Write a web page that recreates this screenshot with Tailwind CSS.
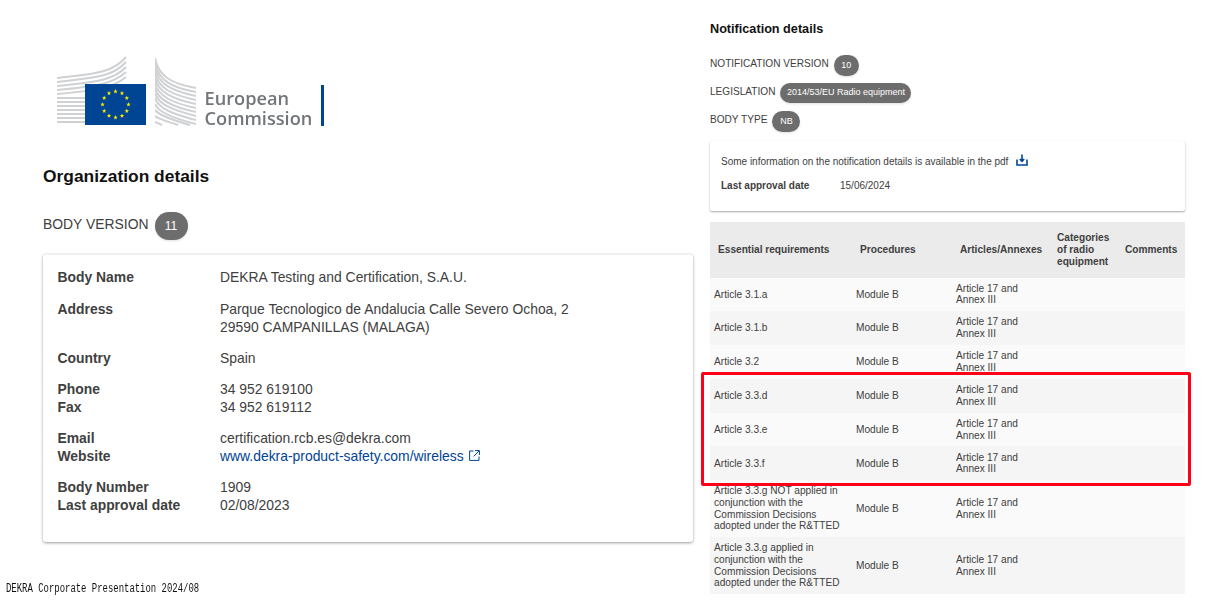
<!DOCTYPE html>
<html lang="en">
    <head>
        <meta charset="UTF-8" />
        <title>Organization details</title>
        <script src="https://cdn.jsdelivr.net/npm/@tailwindcss/browser@4"></script>
    </head>
    <body class="relative h-[604px] w-[1207px] overflow-hidden bg-white font-['Liberation_Sans',sans-serif] text-[#404040]">
        <div class="flex h-full items-start">
            <!-- Left column: body details -->
            <div class="flex h-full w-[710px] shrink-0 flex-col">
                <div class="pl-[57px] pt-[56px]">
                    <svg width="270" height="72" viewBox="57 56 270 72" class="block blur-[0.4px]">
                        <defs>
                            <clipPath id="rightBuilding"><rect x="155" y="56" width="41" height="70" /></clipPath>
                            <polygon id="star" points="0,-2.4 .6,-.8 2.3,-.8 .9,.3 1.4,2 0,1 -1.4,2 -.9,.3 -2.3,-.8 -.6,-.8" fill="#ffed00" />
                        </defs>
                        <g fill="none" stroke="#cfd1d3" stroke-width="2">
                            <path d="M57 78C90 74 112 74 126 57" />
                            <path d="M57 82C90 78 112 78 126 62" />
                            <path d="M57 86C90 82 112 82 126 67" />
                            <path d="M57 90C90 87 112 85 126 72" />
                            <path d="M57 94C90 91 112 89 126 77" />
                            <path d="M57 98H85M57 102H85M57 106H85M57 110H85M57 114H85M57 118H85M57 122H85" />
                        </g>
                        <rect x="85" y="84" width="61" height="41" fill="#004494" />
                        <use href="#star" x="115.5" y="91.5" />
                        <use href="#star" x="122" y="93.2" />
                        <use href="#star" x="126.8" y="98" />
                        <use href="#star" x="128.5" y="104.5" />
                        <use href="#star" x="126.8" y="111" />
                        <use href="#star" x="122" y="115.8" />
                        <use href="#star" x="115.5" y="117.5" />
                        <use href="#star" x="109" y="115.8" />
                        <use href="#star" x="104.2" y="111" />
                        <use href="#star" x="102.5" y="104.5" />
                        <use href="#star" x="104.2" y="98" />
                        <use href="#star" x="109" y="93.2" />
                        <g fill="none" stroke="#cfd1d3" stroke-width="2" clip-path="url(#rightBuilding)">
                            <path d="M155 58C158 76 172 84 196 88" />
                            <path d="M155 63C158 80 172 88 196 92" />
                            <path d="M155 68C158 84 172 91 196 96" />
                            <path d="M155 73C158 88 172 95 196 100" />
                            <path d="M155 78C158 92 172 99 196 104" />
                            <path d="M155 83C158 96 172 103 196 108" />
                            <path d="M155 88C158 100 172 107 196 112" />
                            <path d="M155 93C158 104 172 110 196 116" />
                            <path d="M155 98C158 108 172 114 196 120" />
                            <path d="M155 104C158 112 172 118 196 124" />
                            <path d="M155 110C160 116 172 120 190 125" />
                            <path d="M155 116C160 120 170 122 178 125" />
                            <path d="M155 122L162 125" />
                        </g>
                        <text x="204.5" y="104.5" font-family="Open Sans" font-size="18.2" font-weight="600" fill="#72767a">European</text>
                        <text x="204.5" y="125" font-family="Open Sans" font-size="18.2" font-weight="600" fill="#72767a">Commission</text>
                        <rect x="321" y="85" width="3" height="41" fill="#004494" />
                    </svg>
                </div>

                <h2 class="ml-[43px] mt-[36px] text-[17.4px] leading-[24px] font-bold text-[#111]">Organization details</h2>

                <div class="ml-[43px] mt-[24px] flex h-[28px] items-center">
                    <span class="-mt-[4px] text-[13.9px] leading-[18px]">BODY VERSION</span>
                    <span class="ml-[6px] flex h-[28px] w-[33px] items-center justify-center rounded-full bg-[#6d6d6d] text-[12px] text-white shadow-sm">11</span>
                </div>

                <div class="ml-[43px] mt-[14px] h-[288px] w-[650px] rounded-[3px] border-t border-[#eee] bg-white px-[14.5px] pt-[13px] text-[13.9px] leading-[18px] shadow-[0_1px_3px_rgba(0,0,0,.4)]">
                    <dl class="grid grid-cols-[162.5px_1fr]">
                        <dt class="font-bold">Body Name</dt>
                        <dd>DEKRA Testing and Certification, S.A.U.</dd>
                        <dt class="mt-[14px] font-bold">Address</dt>
                        <dd class="mt-[14px]">Parque Tecnologico de Andalucia Calle Severo Ochoa, 2<br />29590 CAMPANILLAS (MALAGA)</dd>
                        <dt class="mt-[13px] font-bold">Country</dt>
                        <dd class="mt-[13px]">Spain</dd>
                        <dt class="mt-[13px] font-bold">Phone</dt>
                        <dd class="mt-[13px]">34 952 619100</dd>
                        <dt class="font-bold">Fax</dt>
                        <dd>34 952 619112</dd>
                        <dt class="mt-[13px] font-bold">Email</dt>
                        <dd class="mt-[13px]">certification.rcb.es@dekra.com</dd>
                        <dt class="font-bold">Website</dt>
                        <dd class="flex items-center text-[#004494]">
                            www.dekra-product-safety.com/wireless
                            <svg width="11" height="11" viewBox="0 0 11 11" fill="none" stroke="currentColor" stroke-width="1" class="mb-[2px] ml-[5px]">
                                <path d="M4.5 1H.6v9.4H10V6.5M6 .6h4.4V5M10.2 .8 4.6 6.4" />
                            </svg>
                        </dd>
                        <dt class="mt-[13px] font-bold">Body Number</dt>
                        <dd class="mt-[13px]">1909</dd>
                        <dt class="font-bold">Last approval date</dt>
                        <dd>02/08/2023</dd>
                    </dl>
                </div>

                <p class="ml-[6px] mt-[40px] origin-left scale-x-[.745] font-['Liberation_Mono',monospace] text-[12px] leading-[14px] whitespace-nowrap text-[#111]">DEKRA Corporate Presentation 2024/08</p>
            </div>

            <!-- Right column: notification details -->
            <div class="w-[475px] shrink-0 text-[10.1px]">
                <h3 class="mt-[22px] text-[12.67px] leading-[15px] font-bold text-[#111]">Notification details</h3>

                <div class="mt-[18px] flex h-[21px] items-center">
                    <span class="-mt-[4px]">NOTIFICATION VERSION</span>
                    <span class="ml-[5px] flex h-[21px] w-[25px] items-center justify-center rounded-full bg-[#6d6d6d] text-[9px] text-white shadow-sm">10</span>
                </div>
                <div class="mt-[7px] flex h-[20px] items-center">
                    <span class="-mt-[3px]">LEGISLATION</span>
                    <span class="ml-[5px] flex h-[20px] w-[131px] items-center justify-center rounded-full bg-[#6d6d6d] text-[9px] text-white shadow-sm">2014/53/EU Radio equipment</span>
                </div>
                <div class="mt-[8px] flex h-[21px] items-center">
                    <span class="-mt-[3px]">BODY TYPE</span>
                    <span class="ml-[5px] flex h-[21px] w-[28px] items-center justify-center rounded-full bg-[#6d6d6d] text-[9px] text-white shadow-sm">NB</span>
                </div>

                <div class="mt-[9px] h-[70px] rounded-[2px] bg-white px-[11px] pt-[13px] text-[10px] shadow-[0_1px_2px_rgba(0,0,0,.35)]">
                    <p class="flex items-center leading-[14px]">
                        Some information on the notification details is available in the pdf
                        <svg width="12" height="12" viewBox="0 0 12 12" fill="none" stroke="#004494" stroke-width="1.6" class="mb-[4px] ml-[8px]">
                            <path d="M1 5.5V11h10V5.5" />
                            <path d="M6 .5v6.5M3.8 5 6 7.4 8.2 5" />
                        </svg>
                    </p>
                    <div class="mt-[9px] flex leading-[14px]">
                        <span class="w-[119px] font-bold">Last approval date</span>
                        <span>15/06/2024</span>
                    </div>
                </div>

                <table class="mt-[11px] w-[475px] table-fixed border-collapse text-[10.13px] leading-[11.7px]">
                    <colgroup>
                        <col class="w-[142px]" />
                        <col class="w-[100px]" />
                        <col class="w-[97px]" />
                        <col class="w-[68px]" />
                        <col class="w-[68px]" />
                    </colgroup>
                    <thead class="bg-[#ebebeb] text-left font-bold">
                        <tr class="h-[55.5px]">
                            <th class="pl-[8px]">Essential requirements</th>
                            <th class="pl-[8px]">Procedures</th>
                            <th class="pl-[8px] whitespace-nowrap">Articles/Annexes</th>
                            <th class="pl-[8px]">Categories of radio equipment</th>
                            <th class="pl-[8px]">Comments</th>
                        </tr>
                    </thead>
                    <tbody>
                        <tr class="h-[33.8px] bg-[#fafafa]">
                            <td class="px-[4px]">Article 3.1.a</td><td class="px-[4px]">Module B</td><td class="px-[4px]">Article 17 and<br />Annex III</td><td></td><td></td>
                        </tr>
                        <tr class="h-[33.8px] bg-[#f5f5f5]">
                            <td class="px-[4px]">Article 3.1.b</td><td class="px-[4px]">Module B</td><td class="px-[4px]">Article 17 and<br />Annex III</td><td></td><td></td>
                        </tr>
                        <tr class="h-[33.8px] bg-[#fafafa]">
                            <td class="px-[4px]">Article 3.2</td><td class="px-[4px]">Module B</td><td class="px-[4px]">Article 17 and<br />Annex III</td><td></td><td></td>
                        </tr>
                        <tr class="h-[33.8px] bg-[#f5f5f5]">
                            <td class="px-[4px]">Article 3.3.d</td><td class="px-[4px]">Module B</td><td class="px-[4px]">Article 17 and<br />Annex III</td><td></td><td></td>
                        </tr>
                        <tr class="h-[33.8px] bg-[#fafafa]">
                            <td class="px-[4px]">Article 3.3.e</td><td class="px-[4px]">Module B</td><td class="px-[4px]">Article 17 and<br />Annex III</td><td></td><td></td>
                        </tr>
                        <tr class="h-[33.8px] bg-[#f5f5f5]">
                            <td class="px-[4px]">Article 3.3.f</td><td class="px-[4px]">Module B</td><td class="px-[4px]">Article 17 and<br />Annex III</td><td></td><td></td>
                        </tr>
                        <tr class="h-[57px] bg-[#fafafa]">
                            <td class="px-[4px]">Article 3.3.g NOT applied in conjunction with the Commission Decisions adopted under the R&amp;TTED</td><td class="px-[4px]">Module B</td><td class="px-[4px]">Article 17 and<br />Annex III</td><td></td><td></td>
                        </tr>
                        <tr class="h-[57px] bg-[#f5f5f5]">
                            <td class="px-[4px]">Article 3.3.g applied in conjunction with the Commission Decisions adopted under the R&amp;TTED</td><td class="px-[4px]">Module B</td><td class="px-[4px]">Article 17 and<br />Annex III</td><td></td><td></td>
                        </tr>
                    </tbody>
                </table>
            </div>
        </div>

        <!-- Red highlight drawn over the table -->
        <div class="absolute left-[701px] top-[372px] h-[114px] w-[490px] rounded-[2px] border-[3px] border-[#ff0019]"></div>
    </body>
</html>
